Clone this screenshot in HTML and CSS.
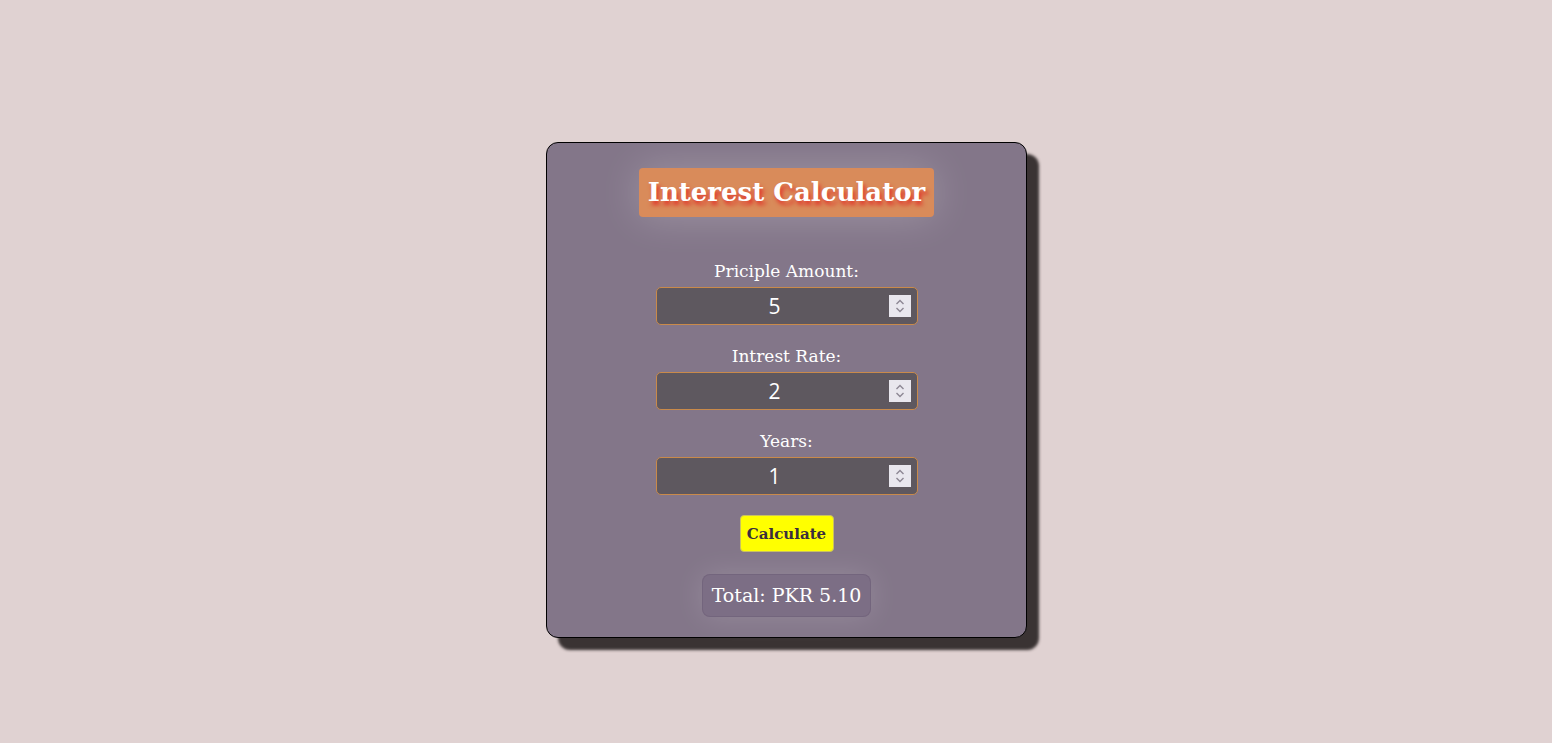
FILE: index.html
```html
<!DOCTYPE html>
<html lang="en">
<head>
<meta charset="utf-8">
<title>Interest Calculator</title>
<link rel="stylesheet" href="styles.css">
</head>
<body>
<div class="card">
  <h1 class="title">Interest Calculator</h1>
  <div class="field">
    <label class="label" for="p">Priciple Amount:</label>
    <div class="wrap">
      <input class="num" id="p" type="number" value="5">
      <span class="spin"><svg width="22" height="22" viewBox="0 0 22 22"><path d="M7.5 9 L11 5.5 L14.5 9 M7.5 13 L11 16.5 L14.5 13" fill="none" stroke="#8d8794" stroke-width="1.4"/></svg></span>
    </div>
  </div>
  <div class="field">
    <label class="label" for="r">Intrest Rate:</label>
    <div class="wrap">
      <input class="num" id="r" type="number" value="2">
      <span class="spin"><svg width="22" height="22" viewBox="0 0 22 22"><path d="M7.5 9 L11 5.5 L14.5 9 M7.5 13 L11 16.5 L14.5 13" fill="none" stroke="#8d8794" stroke-width="1.4"/></svg></span>
    </div>
  </div>
  <div class="field">
    <label class="label" for="y">Years:</label>
    <div class="wrap">
      <input class="num" id="y" type="number" value="1">
      <span class="spin"><svg width="22" height="22" viewBox="0 0 22 22"><path d="M7.5 9 L11 5.5 L14.5 9 M7.5 13 L11 16.5 L14.5 13" fill="none" stroke="#8d8794" stroke-width="1.4"/></svg></span>
    </div>
  </div>
  <button class="btn" type="button">Calculate</button>
  <div class="total">Total: PKR 5.10</div>
</div>
</body>
</html>
```
FILE: styles.css
```css
html, body {
  margin: 0;
  padding: 0;
}
body {
  background: #e0d2d2;
  min-height: 743px;
  display: flex;
  justify-content: center;
  align-items: flex-start;
  padding-top: 142px;
  box-sizing: border-box;
  font-family: Georgia, "DejaVu Serif", serif;
}
.card {
  width: 481px;
  height: 496px;
  box-sizing: border-box;
  margin-left: 21px;
  background: #837689;
  border: 1px solid #000;
  border-radius: 12px;
  box-shadow: 12px 12px 3px #3a3333;
  display: flex;
  flex-direction: column;
  align-items: center;
  padding-top: 25px;
}
.title {
  margin: 0 0 44px;
  padding: 0 9px;
  height: 49px;
  line-height: 49px;
  background: #d98b5a;
  border-radius: 4px;
  color: #fff;
  font-size: 26px;
  font-weight: bold;
  text-shadow: 2px 4px 4px #e0342a;
  box-shadow: 0 0 40px rgba(255,255,255,0.22);
}
.field {
  display: flex;
  flex-direction: column;
  align-items: center;
}
.field + .field {
  margin-top: 21px;
}
.label {
  color: #fff;
  font-size: 17px;
  line-height: 20px;
  margin-bottom: 6px;
}
.wrap {
  position: relative;
  width: 262px;
  height: 38px;
}
.num {
  width: 262px;
  height: 38px;
  box-sizing: border-box;
  background: #5e585f;
  border: 1px solid #c98a4a;
  border-radius: 5px;
  color: #fff;
  text-align: center;
  font-family: "Open Sans", "Noto Sans", sans-serif;
  font-size: 21px;
  padding: 0 32px 0 8px;
  outline: none;
  -moz-appearance: textfield;
}
.num::-webkit-inner-spin-button,
.num::-webkit-outer-spin-button {
  -webkit-appearance: none;
  margin: 0;
}
.spin {
  position: absolute;
  right: 7px;
  top: 8px;
  width: 22px;
  height: 22px;
  background: #e9e7ee;
  display: block;
}
.spin svg {
  display: block;
}
.btn {
  margin-top: 20px;
  width: 94px;
  height: 37px;
  background: #ffff00;
  border: 1px solid #c8c060;
  border-radius: 4px;
  color: #3a2e3e;
  font-family: Georgia, "DejaVu Serif", serif;
  font-weight: bold;
  font-size: 15px;
  padding: 0;
}
.total {
  margin-top: 22px;
  height: 43px;
  box-sizing: border-box;
  padding: 0 9px;
  line-height: 41px;
  background: rgba(120, 105, 130, 0.6);
  border: 1px solid rgba(110, 95, 120, 0.6);
  border-radius: 8px;
  color: #fff;
  font-size: 19px;
  box-shadow: 0 0 30px rgba(255,255,255,0.15);
}
```
